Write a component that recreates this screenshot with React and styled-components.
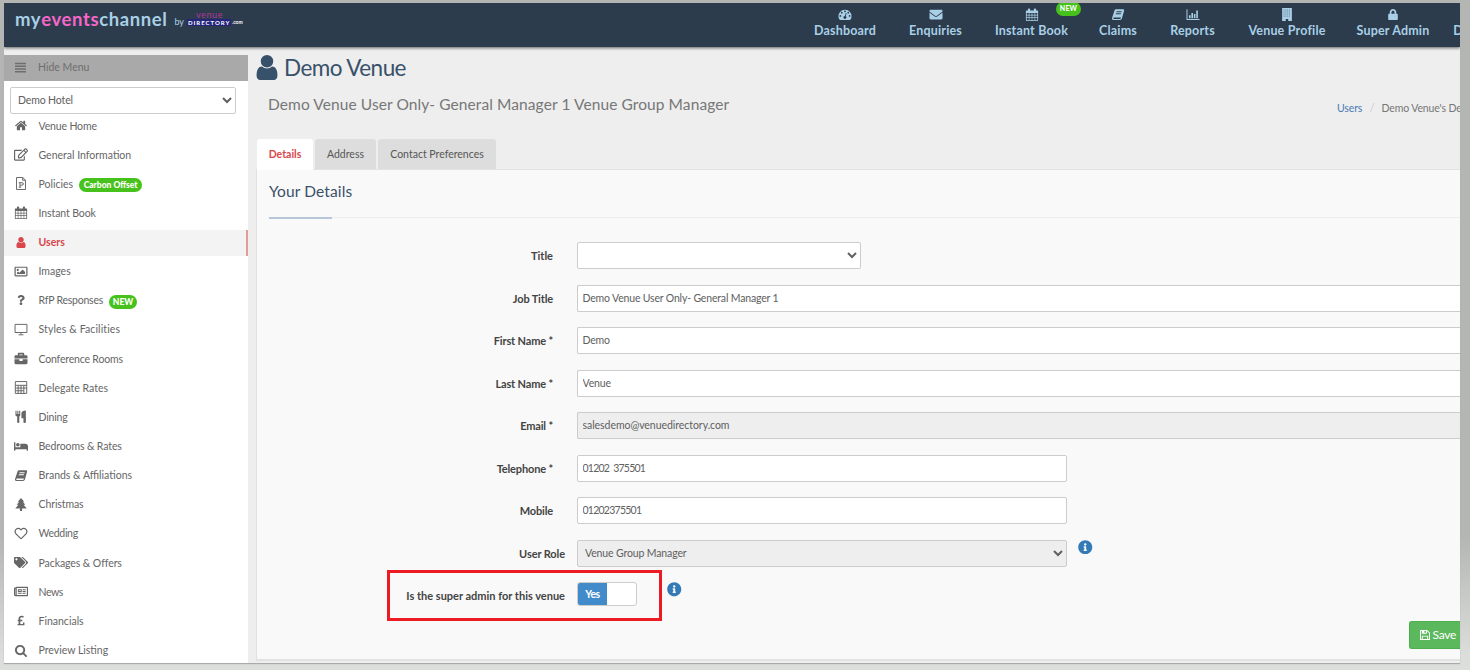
import React from 'react';
import styled, { createGlobalStyle } from 'styled-components';
import {
  FaBed, FaBriefcase, FaEnvelope, FaInfoCircle, FaLock, FaPoundSign,
  FaQuestion, FaRegEdit, FaRegHeart, FaRegImage, FaRegNewspaper, FaTags,
} from 'react-icons/fa';

const navy = '#2c3c4c';
const paleBlue = '#a9cfe6';
const red = '#d9474c';
const green = '#47c21c';
const textGrey = '#666';

const GlobalStyle = createGlobalStyle`
  * {
    box-sizing: border-box;
  }

  body {
    margin: 0;
    font-family: Lato, "Open Sans", sans-serif;
    font-size: 10.5px;
  }
`;

const Backdrop = styled.div`
  background: linear-gradient(#b4b6b4 0%, #b4b6b4 80%, #dcdedc 98%);
  height: 670px;
  overflow: hidden;
  padding: 3px 10px 7px 4px;
  width: 1470px;
`;

const Window = styled.div`
  background-color: #eee;
  box-shadow: 0 1px 1px #aaa;
  display: flex;
  flex-direction: column;
  height: 660px;
  overflow: hidden;
`;

const Header = styled.header`
  background-color: ${navy};
  box-shadow: 0 1px 3px rgba(0, 0, 0, 0.6);
  display: flex;
  flex: 0 0 44px;
  justify-content: space-between;
  padding-left: 11px;
`;

const Logo = styled.div`
  color: ${paleBlue};
  display: flex;
  font-size: 18.5px;
  font-weight: 700;
  height: 34px;
  letter-spacing: 0.6px;
  line-height: 33px;
`;

const Pink = styled.span`
  color: #f766c9;
`;

const By = styled.span`
  font-size: 9px;
  font-weight: 400;
  letter-spacing: 0;
  line-height: 38px;
  margin: 0 3px 0 7px;
`;

const Directory = styled.span`
  align-content: start;
  color: #fff;
  display: grid;
  font-size: 6px;
  grid-template-columns: 44px 13px;
  letter-spacing: 1px;
  line-height: 7px;
  padding-top: 8px;
`;

const DirectoryTop = styled.span`
  color: #b1379d;
  font-size: 9px;
  font-weight: 400;
  grid-column: 1 / 3;
  letter-spacing: 0.6px;
  line-height: 8px;
  padding-left: 9px;
`;

const DirectoryName = styled.span`
  background-color: #25257c;
  padding-left: 1px;
`;

const DotCom = styled.span`
  font-size: 5px;
  letter-spacing: 0;
  padding-left: 1px;
`;

const Nav = styled.nav`
  display: flex;
  flex: 0 0 662px;
  overflow: hidden;
`;

const NavLink = styled.a`
  align-items: center;
  color: ${paleBlue};
  display: flex;
  flex: 0 0 ${props => props.$width}px;
  flex-direction: column;
  font-size: 12.5px;
  font-weight: 700;
  letter-spacing: 0.18px;
  line-height: 16px;
  padding-top: 5px;
  position: relative;
  white-space: nowrap;

  &:last-child {
    align-items: flex-end;
  }

  svg {
    height: ${props => props.$iconHeight || 13}px;
    margin: ${props => (props.$iconHeight ? '1px 0 3px' : '0 0 2px')};
    width: 14px;
  }
`;

const NavBadge = styled.span`
  background-color: ${green};
  border-radius: 8px;
  color: #fff;
  font-size: 7px;
  font-weight: 900;
  height: 14px;
  line-height: 13px;
  position: absolute;
  right: 3px;
  text-align: center;
  top: -1px;
  width: 25px;
`;

const Columns = styled.div`
  display: flex;
  flex: 1;
  min-height: 0;
`;

const Sidebar = styled.aside`
  background-color: #fff;
  color: ${textGrey};
  flex: 0 0 244px;
  margin-top: 8px;
`;

const MenuToggle = styled.div`
  align-items: center;
  background-color: #a9a9a9;
  color: #6e6e6e;
  display: flex;
  height: 26px;
  padding: 0 0 2px 11px;

  svg {
    height: 11px;
    margin: 1px 12px 0 0;
    width: 11px;
  }
`;

const SelectBox = styled.select`
  background-color: ${props => (props.disabled ? '#eee' : '#fff')};
  border: 1px solid #ccc;
  border-radius: 2px;
  color: #606060;
  font: inherit;
  height: 27px;
  letter-spacing: -0.13px;
  opacity: 1;
  padding: 0 0 1px 3px;
  width: ${props => props.$width}px;
`;

const VenuePicker = styled.div`
  height: 32px;
  padding: 6px 0 0 6px;
`;

const Menu = styled.ul`
  list-style: none;
  margin: 0;
  padding: 0;
`;

const MenuItem = styled.li`
  align-items: center;
  display: flex;
  height: 26px;
  margin-bottom: 3.15px;
  padding: 0 0 1px 9.5px;
  white-space: nowrap;

  > svg {
    flex: none;
    height: ${props => props.$iconHeight || 13}px;
    margin-right: 11px;
    width: 14px;
  }

  ${props => props.$active && `
    background-color: #f3f3f3;
    box-shadow: inset -2px 0 0 #e59a9c;
    color: ${red};
    font-weight: 700;
  `}
`;

const Badge = styled.span`
  background-color: ${green};
  border-radius: 8px;
  color: #fff;
  font-size: 8.5px;
  font-weight: 900;
  height: 14px;
  letter-spacing: 0;
  line-height: 14px;
  margin: 3px 0 0 6px;
  text-align: center;
  width: ${props => props.$width}px;
`;

const ItemText = styled.span`
  letter-spacing: ${props => props.$track || 0}px;
`;

const Main = styled.main`
  flex: 1;
  min-width: 0;
  padding-left: 8px;
`;

const Title = styled.h1`
  align-items: center;
  color: #38516a;
  display: flex;
  font-size: 22.5px;
  font-weight: 400;
  height: 41px;
  letter-spacing: -0.55px;
  margin: 0;
  padding-bottom: 1px;

  svg {
    height: 25px;
    margin-right: 6px;
    width: 22px;
  }
`;

const SubHeader = styled.div`
  display: flex;
  height: 51px;
  justify-content: space-between;
  padding-left: 12px;
`;

const SubTitle = styled.h2`
  color: #777;
  font-size: 15.5px;
  font-weight: 400;
  letter-spacing: 0.09px;
  line-height: 32px;
  margin: 0;
`;

const Breadcrumb = styled.div`
  color: #777;
  flex: 0 0 123px;
  letter-spacing: -0.12px;
  line-height: 40px;
  overflow: hidden;
  white-space: nowrap;
`;

const CrumbLink = styled.a`
  color: #4a7ab5;
`;

const Slash = styled.span`
  color: #ccc;
  padding: 0 7px 0 7.5px;
`;

const Tabs = styled.div`
  display: flex;
  gap: 2px;
  height: 30px;
  padding-left: 1px;
`;

const Tab = styled.button`
  background-color: ${props => (props.$active ? '#fff' : '#ddd')};
  border: 0;
  border-radius: 3px 3px 0 0;
  color: ${props => (props.$active ? red : '#555')};
  font: inherit;
  font-weight: ${props => (props.$active ? 700 : 400)};
  height: ${props => (props.$active ? 31 : 30)}px;
  padding: 0 0 1px;
  position: relative;
  width: ${props => props.$width}px;
`;

const Panel = styled.section`
  background-color: #f9f9f9;
  border: 0 solid #e2e2e2;
  border-width: 1px 0 2px 1px;
  height: 492px;
  padding-left: 12px;
`;

const PanelTitle = styled.h3`
  border-bottom: 1px solid #eee;
  color: #3b5068;
  font-size: 15.5px;
  font-weight: 400;
  height: 48px;
  letter-spacing: 0.12px;
  line-height: 43px;
  margin: 0 0 24px;

  &::after {
    background-color: #b7c6d8;
    content: "";
    display: block;
    height: 2px;
    margin-top: 4px;
    width: 63px;
  }
`;

const Row = styled.div`
  display: flex;
  height: 42.5px;
`;

const Label = styled.label`
  color: #444;
  flex: 0 0 ${props => props.$width}px;
  font-size: 11px;
  font-weight: 700;
  letter-spacing: ${props => props.$track || 0}px;
  line-height: 28px;
  text-align: right;
`;

const Control = styled.div`
  display: flex;
  flex: 1;
  margin-left: ${props => props.$gap}px;
  min-width: 0;
`;

const Input = styled.input`
  background-color: ${props => (props.disabled ? '#eee' : '#fff')};
  border: 1px solid #ccc;
  border-radius: ${props => (props.$wide ? '2px 0 0 2px' : '2px')};
  border-right-width: ${props => (props.$wide ? 0 : 1)}px;
  color: #606060;
  font: inherit;
  height: 27px;
  letter-spacing: ${props => props.$track}px;
  padding: 0 4.5px 1px;
  width: ${props => (props.$wide ? '100%' : '490px')};
  word-spacing: ${props => props.$wordGap || 0}px;
`;

const Info = styled(FaInfoCircle)`
  color: #337ab7;
  flex: none;
  height: 14.5px;
  margin-left: ${props => props.$gap}px;
  width: 14.5px;
`;

const Switch = styled.div`
  background-color: #fff;
  border: 1px solid #ccc;
  border-radius: 3px;
  height: 24px;
  overflow: hidden;
  width: 60px;
`;

const SwitchOn = styled.div`
  background-color: #428bca;
  color: #fff;
  font-weight: 700;
  height: 22px;
  letter-spacing: -0.4px;
  line-height: 22px;
  text-align: center;
  width: 29px;
`;

const Highlight = styled.div`
  border: 3px solid #ed1c24;
  height: 51px;
  left: 387px;
  pointer-events: none;
  position: absolute;
  top: 570px;
  width: 275px;
`;

const Footer = styled.div`
  display: flex;
  justify-content: flex-end;
  margin-top: -4px;
`;

const SaveButton = styled.button`
  align-items: center;
  background-color: #5cb85c;
  border: 1px solid #4cae4c;
  border-radius: 3px 0 0 3px;
  border-right: 0;
  color: #fff;
  display: flex;
  font: inherit;
  font-size: 12px;
  height: 28px;
  letter-spacing: -0.3px;
  padding: 0 0 0 9.5px;
  width: 51px;

  svg {
    height: 10px;
    margin-right: 3px;
    width: 10px;
  }
`;

function Icon({ children, size = 16 }) {
  return <svg viewBox={`0 0 ${size} ${size}`} fill="currentColor">{children}</svg>;
}

function Outline({ children }) {
  return (
    <svg viewBox="0 0 16 16" fill="none" stroke="currentColor" strokeWidth="1.2">{children}</svg>
  );
}

function UserIcon() {
  return (
    <svg viewBox="256 128 1280 1536" fill="currentColor">
      <path d="M1536 1399q0 109-62.500 187t-150.500 78h-854q-88 0-150.500-78t-62.500-187q0-85 8.500-160.500t31.500-152 58.500-131 94-89 134.500-34.500q131 128 313 128t313-128q76 0 134.500 34.500t94 89 58.500 131 31.500 152 8.500 160.500zm-256-887q0 159-112.500 271.500t-271.500 112.500-271.500-112.500-112.500-271.500 112.500-271.500 271.500-112.500 271.500 112.500 112.500 271.500z" />
    </svg>
  );
}

function HomeIcon() {
  return (
    <Icon size={1792}>
      <path d="M1472 992v480q0 26-19 45t-45 19h-384v-384h-256v384h-384q-26 0-45-19t-19-45v-480q0-1 .5-3t.5-3l575-474 575 474q1 2 1 6zm223-69l-62 74q-8 9-21 11h-3q-13 0-21-7l-692-577-692 577q-12 8-24 7-13-2-21-11l-62-74q-8-10-7-23.500t11-21.500l719-599q32-26 76-26t76 26l244 204v-195q0-14 9-23t23-9h192q14 0 23 9t9 23v408l219 182q10 8 11 21.500t-7 23.500z" />
    </Icon>
  );
}

function SearchIcon() {
  return (
    <Icon size={1792}>
      <path d="M1216 832q0-185-131.500-316.500t-316.500-131.500-316.500 131.500-131.500 316.500 131.500 316.500 316.500 131.500 316.500-131.500 131.500-316.500zm512 832q0 52-38 90t-90 38q-54 0-90-38l-343-342q-179 124-399 124-143 0-273.500-55.500t-225-150-150-225-55.500-273.500 55.500-273.500 150-225 225-150 273.500-55.500 273.500 55.500 225 150 150 225 55.500 273.500q0 220-124 399l343 343q37 37 37 90z" />
    </Icon>
  );
}

function BarsIcon() {
  return <Icon><path d="M0 1h16v2.300H0zM0 5h16v2.300H0zM0 9h16v2.300H0zM0 13h16v2.300H0z" /></Icon>;
}

function CalendarIcon() {
  return (
    <Icon>
      <path
        fillRule="evenodd"
        d="M1 3h2V1.500Q3 .5 4 .5h.700q1 0 1 1V3h4.600V1.500q0-1 1-1h.700q1 0 1 1V3h2q.500 0 .5.5v12q0 .5-.5.5H1q-.5 0-.5-.5v-12Q.500 3 1 3zM1.500 6v2.300h2.500V6zM4.800 6v2.300h2.800V6zM8.400 6v2.300h2.800V6zM12 6v2.300h2.500V6zM1.500 9.100v2.300h2.500V9.100zM4.800 9.100v2.300h2.800V9.100zM8.400 9.100v2.300h2.800V9.100zM12 9.100v2.300h2.500V9.100zM1.500 12.200V15h2.500v-2.800zM4.800 12.200V15h2.800v-2.800zM8.400 12.200V15h2.800v-2.800zM12 12.200V15h2.500v-2.800z"
      />
    </Icon>
  );
}

function BookIcon() {
  return (
    <Icon>
      <path
        fillRule="evenodd"
        d="M5.500 1.500h9q1.500.3 1 1.800L12.800 13q-.5 1.800-2.300 1.800H2.200Q.2 14.500.6 12.500L3.700 3q.5-1.500 1.800-1.500zM6.300 4l-.4 1.100h6.300l.4-1.100zM5.500 6.500l-.4 1.100h6.300l.4-1.100zM2.300 12.200q-.7 1.300.5 1.400h7.500q.8 0 1.100-.9l.3-1H2.800z"
      />
    </Icon>
  );
}

function DashboardIcon() {
  return (
    <Icon>
      <path
        fillRule="evenodd"
        d="M8 2a8 8 0 0 1 6.800 12.200q-.3.500-.9.500H2.100q-.6 0-.9-.5A8 8 0 0 1 8 2zM8 3a1.100 1.100 0 1 0 0 2.200A1.100 1.100 0 0 0 8 3zM4 4.700a1.100 1.100 0 1 0 0 2.200 1.100 1.100 0 0 0 0-2.200zM12 4.700a1.100 1.100 0 1 0 0 2.200 1.100 1.100 0 0 0 0-2.200zM2.300 8.700a1.100 1.100 0 1 0 0 2.200 1.100 1.100 0 0 0 0-2.200zM13.700 8.700a1.100 1.100 0 1 0 0 2.200 1.100 1.100 0 0 0 0-2.200zM9 6.300L7.800 9.900a1.700 1.700 0 1 0 1.100.3L10 6.600z"
      />
    </Icon>
  );
}

function ChartIcon() {
  return <Icon><path d="M0 1.500h1.200v12H16v1.300H0zM3 9h2v3.500H3zM6 6h2v6.500H6zM9 7.500h2v5H9zM12 3h2v9.500h-2z" /></Icon>;
}

function BuildingIcon() {
  return (
    <Icon>
      <path d="M2 0h12v16H9.500v-2.500h-3V16H2z" />
      <path stroke={navy} strokeWidth=".8" strokeDasharray="1 1.300" d="M3.800 2.500h9M3.800 5h9M3.800 7.500h9M3.800 10h9" />
    </Icon>
  );
}

function PolicyIcon() {
  return (
    <Outline>
      <path d="M2.500.6h7.700l3.300 3.300v11.500h-11zM10 .6V4h3.500M5.200 7h4q1.800 0 1.800 1.500T9.200 10H7M6.700 7v5.500M5.200 12.500h3" />
    </Outline>
  );
}

function MonitorIcon() {
  return <Outline><path d="M.7 1.700h14.600v10H.7zM8 12v2M5 14.500h6" /></Outline>;
}

function CalculatorIcon() {
  return (
    <Outline>
      <path d="M1 .7h14v14.600H1zM1 5.300h14M1 8.700h14M1 12h10.500M4.500 5.300v10M8 5.300v10M11.500 5.300v10" />
    </Outline>
  );
}

function CutleryIcon() {
  return (
    <Icon>
      <path d="M1.200 1h1.300v4h1V1h1.300v4h1V1h1.300v5.500q0 1-1.200 1.500v7q0 1-1.300 1t-1.300-1V8Q1.200 7.500 1.200 6.500zM14 .5V15q0 1-1.500 1T11 15v-5H8.500V4Q9 .5 14 .5z" />
    </Icon>
  );
}

function TreeIcon() {
  return <Icon><path d="M8 0l4 4.500h-1.700l3 3.800h-2L15 13H9.300v3H6.700v-3H1l3.700-4.700h-2l3-3.800H4z" /></Icon>;
}

function SaveIcon() {
  return (
    <Icon>
      <path
        fillRule="evenodd"
        d="M1 0h10.500L16 4.500V15q0 1-1 1H1q-1 0-1-1V1q0-1 1-1zM1.500 1.500v13H3V9h10v5.500h1.500V5L11 1.500V6H3V1.500zM7 1.500v3h2.500v-3zM4.500 10.500v4h7v-4z"
      />
    </Icon>
  );
}

const navLinks = [
  { label: 'Dashboard', icon: DashboardIcon, width: 94 },
  { label: 'Enquiries', icon: FaEnvelope, width: 87 },
  { label: 'Instant Book', icon: CalendarIcon, width: 105, badge: 'NEW' },
  { label: 'Claims', icon: BookIcon, width: 68 },
  { label: 'Reports', icon: ChartIcon, width: 81 },
  { label: 'Venue Profile', icon: BuildingIcon, width: 108 },
  { label: 'Super Admin', icon: FaLock, iconHeight: 11, width: 104 },
  { label: 'D', width: 18 },
];

const menuItems = [
  { label: 'Venue Home', icon: HomeIcon, track: -0.15 },
  { label: 'General Information', icon: FaRegEdit },
  { label: 'Policies', icon: PolicyIcon, badge: 'Carbon Offset', badgeWidth: 63 },
  { label: 'Instant Book', icon: CalendarIcon, track: -0.1 },
  { label: 'Users', icon: UserIcon, iconHeight: 11, active: true },
  { label: 'Images', icon: FaRegImage },
  { label: 'RfP Responses', icon: FaQuestion, iconHeight: 10, track: -0.22, badge: 'NEW', badgeWidth: 28 },
  { label: 'Styles & Facilities', icon: MonitorIcon, track: 0.12 },
  { label: 'Conference Rooms', icon: FaBriefcase, track: -0.18 },
  { label: 'Delegate Rates', icon: CalculatorIcon },
  { label: 'Dining', icon: CutleryIcon, track: -0.2 },
  { label: 'Bedrooms & Rates', icon: FaBed, track: -0.12 },
  { label: 'Brands & Affiliations', icon: BookIcon },
  { label: 'Christmas', icon: TreeIcon, track: -0.1 },
  { label: 'Wedding', icon: FaRegHeart, track: -0.3 },
  { label: 'Packages & Offers', icon: FaTags, track: -0.08 },
  { label: 'News', icon: FaRegNewspaper, track: -0.4 },
  { label: 'Financials', icon: FaPoundSign, iconHeight: 11 },
  { label: 'Preview Listing', icon: SearchIcon },
];

function Field({ label, wide, value, disabled, track = -0.17, wordGap }) {
  return (
    <Row>
      <Label $width={284} $track={-0.15}>{label}</Label>
      <Control $gap={24}>
        <Input $wide={wide} $track={track} $wordGap={wordGap} defaultValue={value} disabled={disabled} />
      </Control>
    </Row>
  );
}

function TopBar() {
  return (
    <Header>
      <Logo>
        my<Pink>events</Pink>channel
        <By>by</By>
        <Directory>
          <DirectoryTop>venue</DirectoryTop>
          <DirectoryName>DIRECTORY</DirectoryName>
          <DotCom>.com</DotCom>
        </Directory>
      </Logo>
      <Nav>
        {navLinks.map(({ label, icon: NavIcon, iconHeight, width, badge }) => (
          <NavLink key={label} $width={width} $iconHeight={iconHeight}>
            {NavIcon ? <NavIcon /> : <svg />}
            {label}
            {badge && <NavBadge>{badge}</NavBadge>}
          </NavLink>
        ))}
      </Nav>
    </Header>
  );
}

function SideMenu() {
  return (
    <Sidebar>
      <MenuToggle><BarsIcon />Hide Menu</MenuToggle>
      <VenuePicker>
        <SelectBox $width={226}><option>Demo Hotel</option></SelectBox>
      </VenuePicker>
      <Menu>
        {menuItems.map(({ label, icon: ItemIcon, iconHeight, track, active, badge, badgeWidth }) => (
          <MenuItem key={label} $active={active} $iconHeight={iconHeight}>
            <ItemIcon />
            <ItemText $track={track}>{label}</ItemText>
            {badge && <Badge $width={badgeWidth}>{badge}</Badge>}
          </MenuItem>
        ))}
      </Menu>
    </Sidebar>
  );
}

export default function App() {
  return (
    <>
      <GlobalStyle />
      <Backdrop>
        <Window>
          <TopBar />
          <Columns>
            <SideMenu />
            <Main>
              <Title><UserIcon />Demo Venue</Title>
              <SubHeader>
                <SubTitle>Demo Venue User Only- General Manager 1 Venue Group Manager</SubTitle>
                <Breadcrumb>
                  <CrumbLink>Users</CrumbLink><Slash>/</Slash>Demo Venue's Details
                </Breadcrumb>
              </SubHeader>
              <Tabs>
                <Tab $active $width={56}>Details</Tab>
                <Tab $width={61}>Address</Tab>
                <Tab $width={118}>Contact Preferences</Tab>
              </Tabs>
              <Panel>
                <PanelTitle>Your Details</PanelTitle>
                <Row>
                  <Label $width={284}>Title</Label>
                  <Control $gap={24}><SelectBox $width={284} /></Control>
                </Row>
                <Field label="Job Title" wide value="Demo Venue User Only- General Manager 1" />
                <Field label="First Name *" wide value="Demo" />
                <Field label="Last Name *" wide value="Venue" />
                <Field label="Email *" wide value="salesdemo@venuedirectory.com" disabled track={-0.05} />
                <Field label="Telephone *" value="01202 375501" track={-0.75} wordGap={2} />
                <Field label="Mobile" value="01202375501" track={-0.75} />
                <Row>
                  <Label $width={296} $track={-0.1}>User Role</Label>
                  <Control $gap={12}>
                    <SelectBox $width={490} disabled><option>Venue Group Manager</option></SelectBox>
                    <Info $gap={11} />
                  </Control>
                </Row>
                <Row>
                  <Label $width={296}>Is the super admin for this venue</Label>
                  <Control $gap={12}>
                    <Switch><SwitchOn>Yes</SwitchOn></Switch>
                    <Info $gap={30} />
                  </Control>
                </Row>
                <Footer>
                  <SaveButton><SaveIcon />Save</SaveButton>
                </Footer>
              </Panel>
            </Main>
          </Columns>
        </Window>
        <Highlight />
      </Backdrop>
    </>
  );
}
